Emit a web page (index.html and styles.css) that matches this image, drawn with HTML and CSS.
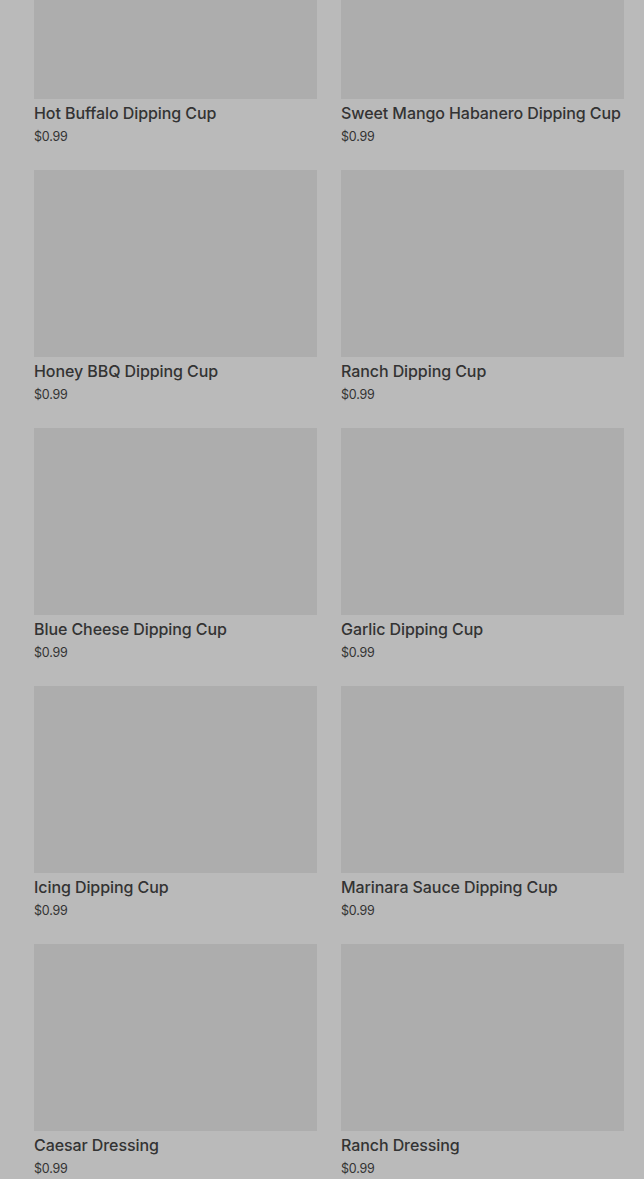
FILE: index.html
```html
<!DOCTYPE html>
<html lang="en">
  <head>
    <meta charset="UTF-8" />
    <meta name="viewport" content="width=device-width, initial-scale=1.0" />
    <title>Dipping Cups</title>
    <link rel="stylesheet" href="styles.css">
  </head>
  <body>
    <div class="grid">
      <div class="card">
        <div class="thumb"></div>
        <p class="name">Hot Buffalo Dipping Cup</p>
        <p class="price">$0.99</p>
      </div>
      <div class="card">
        <div class="thumb"></div>
        <p class="name">Sweet Mango Habanero Dipping Cup</p>
        <p class="price">$0.99</p>
      </div>
      <div class="card">
        <div class="thumb"></div>
        <p class="name">Honey BBQ Dipping Cup</p>
        <p class="price">$0.99</p>
      </div>
      <div class="card">
        <div class="thumb"></div>
        <p class="name">Ranch Dipping Cup</p>
        <p class="price">$0.99</p>
      </div>
      <div class="card">
        <div class="thumb"></div>
        <p class="name">Blue Cheese Dipping Cup</p>
        <p class="price">$0.99</p>
      </div>
      <div class="card">
        <div class="thumb"></div>
        <p class="name">Garlic Dipping Cup</p>
        <p class="price">$0.99</p>
      </div>
      <div class="card">
        <div class="thumb"></div>
        <p class="name">Icing Dipping Cup</p>
        <p class="price">$0.99</p>
      </div>
      <div class="card">
        <div class="thumb"></div>
        <p class="name">Marinara Sauce Dipping Cup</p>
        <p class="price">$0.99</p>
      </div>
      <div class="card">
        <div class="thumb"></div>
        <p class="name">Caesar Dressing</p>
        <p class="price">$0.99</p>
      </div>
      <div class="card">
        <div class="thumb"></div>
        <p class="name">Ranch Dressing</p>
        <p class="price">$0.99</p>
      </div>
    </div>
  </body>
</html>
```

FILE: styles.css
```css
body {
  margin: 0;
  background-color: #bababa;
  color: #333333;
  font-family: Inter, "Noto Sans", sans-serif;
}
.grid {
  display: grid;
  grid-template-columns: 283px 283px;
  column-gap: 24px;
  padding: 0 20px 0 34px;
  margin-top: -88px;
}
.card {
  height: 258px;
}
.thumb {
  height: 187px;
  background-color: #adadad;
}
.name {
  margin: 4px 0 0;
  font-size: 16px;
  line-height: 20px;
  font-weight: 500;
  letter-spacing: -0.08px;
}
.price {
  margin: 5px 0 0;
  font-size: 12.5px;
  line-height: 18px;
  letter-spacing: -0.2px;
}
```
